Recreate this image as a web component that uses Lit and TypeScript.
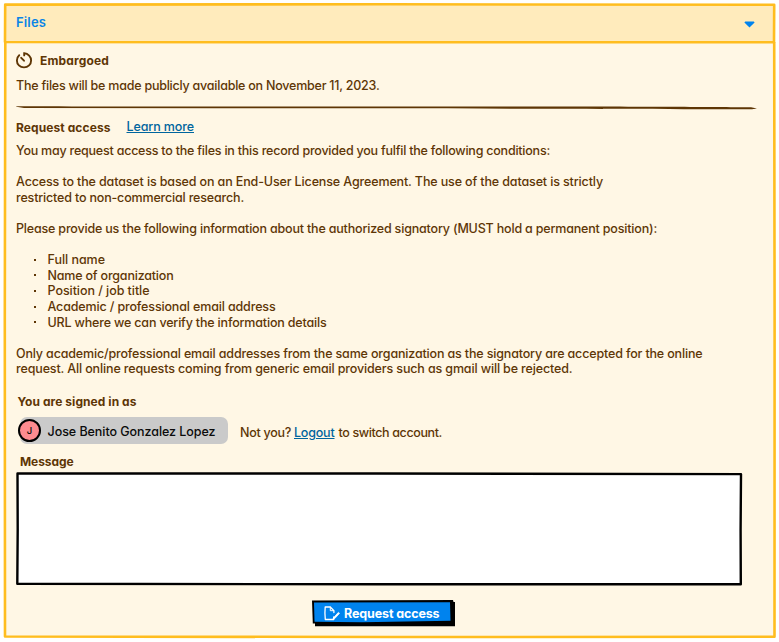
import { LitElement, html, css } from "lit";
import { customElement, property, state, query } from "lit/decorators.js";

/** A run of text whose tracking is adjusted so it fills the given width. */
@customElement("fit-text")
class FitText extends LitElement {
  @property({ type: Number }) width = 0;
  @property() text = "";
  @state() spacing = 0;
  @query(".run") run!: HTMLElement;

  static styles = css`
    :host { display: inline-block; white-space: pre; }
    .run { display: inline-block; text-decoration: inherit; }
  `;

  firstUpdated() {
    const natural = this.run.getBoundingClientRect().width;
    this.spacing = (this.width - natural) / this.text.length;
  }

  render() {
    return html`<span class="run" style="letter-spacing:${this.spacing}px">${this.text}</span>`;
  }
}

type Line = { text: string; width: number; bullet?: boolean } | null;

const conditions: Line[] = [
  { text: "You may request access to the files in this record provided you fulfil the following conditions:", width: 534 },
  null,
  { text: "Access to the dataset is based on an End-User License Agreement. The use of the dataset is strictly", width: 587 },
  { text: "restricted to non-commercial research.", width: 228 },
  null,
  { text: "Please provide us the following information about the authorized signatory (MUST hold a permanent position):", width: 641 },
  null,
  { text: "Full name", width: 57.5, bullet: true },
  { text: "Name of organization", width: 126, bullet: true },
  { text: "Position / job title", width: 102, bullet: true },
  { text: "Academic / professional email address", width: 228, bullet: true },
  { text: "URL where we can verify the information details", width: 279, bullet: true },
  null,
  { text: "Only academic/professional email addresses from the same organization as the signatory are accepted for the online", width: 686.5 },
  { text: "request. All online requests coming from generic email providers such as gmail will be rejected.", width: 556.5 },
];

@customElement("app-root")
class AppRoot extends LitElement {
  static styles = css`
    :host {
      display: block;
      position: relative;
      box-sizing: border-box;
      width: 779px;
      height: 642px;
      padding: 4px 4px 4px 5px;
      overflow: hidden;
      background: #fff;
      color: #5e3605;
      font: 550 12.5px/15.6px Inter, "Noto Sans", sans-serif;
      font-feature-settings: "cv11", "calt" 0;
    }
    svg { display: block; overflow: visible; flex: none; }
    .frame { position: absolute; left: 0; top: 0; pointer-events: none; }
    .panel { width: 770px; height: 633px; background: #fff7e5; }
    header {
      box-sizing: border-box;
      height: 39px;
      display: flex;
      justify-content: space-between;
      padding: 10.5px 20.5px 0 11px;
      background: #ffebbc;
      color: #0a84e6;
      font-size: 13px;
      font-weight: 600;
    }
    header svg { margin-top: 6px; }
    main { padding-left: 11px; }
    .row { display: flex; }
    .strong { font-weight: 700; font-size: 12px; }
    .link { color: #00659e; text-decoration: underline; text-underline-offset: 1px; cursor: pointer; }
    .status { height: 16px; padding-top: 9.5px; gap: 8px; }
    .status svg { margin-top: -1px; }
    .date { height: 16px; margin-top: 9px; }
    .rule { margin-top: 11.5px; }
    .access { height: 16px; margin-top: 9px; gap: 16px; }
    .access .link { margin-top: -1px; }
    .conditions { margin-top: 7px; height: 234px; }
    .line { height: 15.6px; }
    .line.item { padding-left: 31.5px; position: relative; }
    .line.item::before {
      content: "";
      position: absolute;
      left: 18px;
      top: 6.6px;
      width: 2px;
      height: 2px;
      background: #5e3605;
    }
    .signed { margin: 16.5px 0 0 1.5px; height: 16px; }
    .account { margin: 7.5px 0 0 4px; height: 27px; }
    .pill {
      box-sizing: border-box;
      display: flex;
      width: 208px;
      height: 27px;
      border-radius: 7px;
      background: #cacaca;
      color: #0b0b0b;
    }
    .avatar {
      box-sizing: border-box;
      display: flex;
      align-items: center;
      justify-content: center;
      width: 23px;
      height: 23px;
      margin: 2px 6.5px 0 -2px;
      border: 2px solid #000;
      border-radius: 50%;
      background: #fd8b90;
      font-size: 9.5px;
    }
    .pill fit-text { margin-top: 7px; }
    .switch { margin: 8px 0 0 12px; }
    .switch .link { margin: 0 4px 0 3px; }
    .label { margin: 10px 0 0 4px; height: 16px; }
    .message { margin-top: 1.5px; }
    .submit {
      position: relative;
      width: 143px;
      height: 27px;
      margin: 15px 0 0 296px;
      color: #fff;
      cursor: pointer;
    }
    .submit .shape { position: absolute; left: 0; top: 0; }
    .submit .content { position: relative; display: flex; gap: 4px; padding: 6px 0 0 12px; }
    .submit .content .strong { font-size: 12.5px; }
  `;

  private line(l: Line) {
    if (!l) return html`<div class="line"></div>`;
    return html`<div class="line ${l.bullet ? "item" : ""}">
      <fit-text .text=${l.text} .width=${l.width}></fit-text>
    </div>`;
  }

  render() {
    return html`
      <div class="panel">
        <header>
          <fit-text .text=${"Files"} .width=${30}></fit-text>
          <svg width="11" height="7"><path d="M1.200 .6H9.800L10.600 1.600 5.500 6.500.4 1.600Z" fill="#0083ee" /></svg>
        </header>
        <main>
          <div class="row status">
            <svg width="16" height="17" fill="none" stroke="#5e3605" stroke-width="1.900" stroke-linecap="round">
              <path d="M3.200 3.200C1.700 4.500.9 6.200.9 8.400c0 4 3 7 7.100 7s7.100-3 7.100-7C15.100 4.700 12.200 1.500 8.200 1.300V3.400" />
              <path d="M5.200 5.800 8 8.700" />
            </svg>
            <fit-text class="strong" .text=${"Embargoed"} .width=${69}></fit-text>
          </div>
          <div class="date"><fit-text .text=${"The files will be made publicly available on November 11, 2023."} .width=${363.5}></fit-text></div>
          <svg class="rule" width="742" height="6"><path d="M0 1.200C80 1.500 300 1.700 460 1.500S690 2 735 2.200L741 3.600 736 4.200C600 4 400 3.300 200 3.300L8 3 .5 1.800Z" fill="#5e3605" /></svg>
          <div class="row access">
            <fit-text class="strong" .text=${"Request access"} .width=${94.5}></fit-text>
            <fit-text class="link" .text=${"Learn more"} .width=${67.5}></fit-text>
          </div>
          <div class="conditions">${conditions.map((l) => this.line(l))}</div>
          <div class="signed strong"><fit-text .text=${"You are signed in as"} .width=${119}></fit-text></div>
          <div class="row account">
            <div class="pill">
              <span class="avatar">J</span>
              <fit-text .text=${"Jose Benito Gonzalez Lopez"} .width=${168}></fit-text>
            </div>
            <div class="row switch">
              <fit-text .text=${"Not you?"} .width=${51}></fit-text>
              <fit-text class="link" .text=${"Logout"} .width=${40.5}></fit-text>
              <fit-text .text=${"to switch account."} .width=${103.5}></fit-text>
            </div>
          </div>
          <div class="label strong"><fit-text .text=${"Message"} .width=${53.5}></fit-text></div>
          <svg class="message" width="726" height="113" fill="#fff" stroke="#000" stroke-linejoin="round" stroke-width="2.400">
            <path d="M1.500 1.500 360 1.500 725 2.100 724.600 58 724.800 112.300 362 112.300 1.300 111.700 1.700 57Z" />
          </svg>
          <div class="submit">
            <svg class="shape" width="143" height="27">
              <path d="M0 .5 141 0 141.500 2H143V26.200H3V23.500H.8Z" fill="#000" />
              <path d="M2 2.500 138 2.300 138.500 20.800 50 22.200 2.500 21.800Z" fill="#0083ee" />
            </svg>
            <div class="content">
              <svg width="16" height="15" fill="none" stroke="#fff" stroke-width="1.300" stroke-linejoin="round" stroke-linecap="round">
                <path d="M9.700 11V13.500H1.300C.8 9 .8 5 1.200 1H6.300L9.900 4.700V6.500" />
                <path d="M6.300 1.200V4.700H9.700" stroke-width="1" />
                <path d="M14.200 6.600 9.500 11.800 9 13.300 10.700 12.600 15.300 7.600Z" fill="#fff" stroke-width=".8" />
              </svg>
              <fit-text class="strong" .text=${"Request access"} .width=${95.500}></fit-text>
            </div>
          </div>
        </main>
      </div>
      <svg class="frame" width="779" height="642" fill="none" stroke="#ffbd1f" stroke-width="2.600" stroke-linejoin="round">
        <path d="M5.200 4.600 390 4.300 774.200 4.800 774 42.200 390 42.300 5 42Z" />
        <path d="M5.300 42 4.800 320 5 636.500 390 637 774.500 636.800 774.600 320 774.200 42" />
      </svg>
    `;
  }
}
